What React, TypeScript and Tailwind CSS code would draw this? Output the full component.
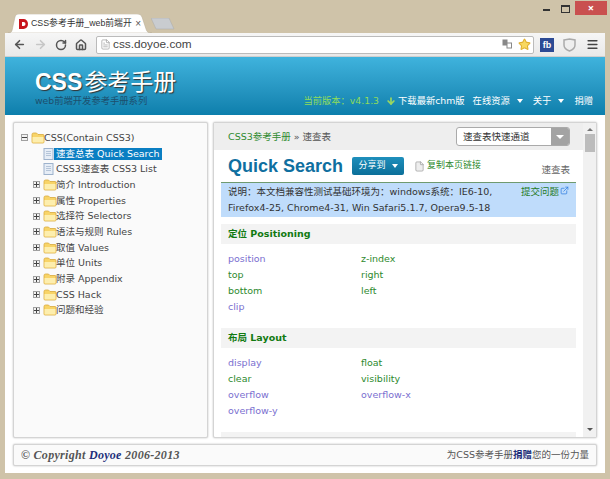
import { ArrowLeft, ArrowRight, RotateCw, Home, Star, Menu, File, FileText, ArrowDown, ExternalLink } from "lucide-react";

const cjk = "font-['DejaVu_Sans','Noto_Sans_CJK_SC',sans-serif]";

function Folder() {
  return (
    <svg width="14" height="12" viewBox="0 0 14 12" className="shrink-0">
      <path d="M1 2.5 Q1 1 2.5 1 H5.5 L7 2.5 H12 Q13 2.5 13 3.5 V10 Q13 11 12 11 H2 Q1 11 1 10 Z" fill="#f8d468" stroke="#d8a93c" strokeWidth="0.8" />
      <path d="M1.5 5 H12.5 V10 Q12.5 10.6 12 10.6 H2 Q1.5 10.6 1.5 10 Z" fill="#fdeeae" />
    </svg>
  );
}

function PageIcon() {
  return (
    <svg width="11" height="12" viewBox="0 0 11 12" className="shrink-0">
      <rect x="1" y="0.5" width="9" height="11" fill="#e6edf6" stroke="#9db2cc" />
      <path d="M3 3.5H8M3 5.5H8M3 7.5H8" stroke="#b4c4d8" />
    </svg>
  );
}

function Toggle({ open }: { open?: boolean }) {
  return (
    <span className="relative w-[7px] h-[7px] border border-[#a0a0a0] bg-[#f2f2f2] shrink-0 flex items-center justify-center">
      <span className="w-[5px] h-px bg-[#444]" />
      {!open && <span className="absolute w-px h-[5px] bg-[#444]" />}
    </span>
  );
}

const treeItems = ["简介 Introduction", "属性 Properties", "选择符 Selectors", "语法与规则 Rules", "取值 Values", "单位 Units", "附录 Appendix", "CSS Hack", "问题和经验"];

function Sidebar() {
  return (
    <aside className={`w-[195px] shrink-0 bg-[#fafafa] border border-[#d4d4d4] shadow-[0_0_2px_#bbb] rounded-[2px] pl-[7px] pt-[7px] text-[9.5px] leading-[16px] text-[#444] ${cjk}`}>
      <div className="flex items-center h-[15.7px]">
        <Toggle open />
        <span className="ml-[3px]"><Folder /></span>
        <span className="-ml-[1px]">CSS(Contain CSS3)</span>
      </div>
      <div className="flex items-center h-[15.7px] pl-[22px]">
        <PageIcon />
        <span className="bg-[#0a7ec2] text-white px-[2px] h-[12px] leading-[12px]">速查总表 Quick Search</span>
      </div>
      <div className="flex items-center h-[15.7px] pl-[22px] gap-[2px]">
        <PageIcon />
        <span>CSS3速查表 CSS3 List</span>
      </div>
      {treeItems.map((t) => (
        <div key={t} className="flex items-center h-[15.7px] pl-[12px]">
          <Toggle />
          <span className="ml-[3px]"><Folder /></span>
          <span className="-ml-[1px]">{t}</span>
        </div>
      ))}
    </aside>
  );
}

function Section({ title, rows }: { title: string; rows: [string, boolean, string?, boolean?][] }) {
  return (
    <section className="mb-[13px]">
      <h2 className={`h-[20px] bg-[#f3f3f3] pl-[7px] text-[9.5px] leading-[20px] font-bold text-[#117a11] ${cjk}`}>{title}</h2>
      <div className="pt-[7px] pl-[7px]">
        {rows.map(([a, av, b, bv]) => (
          <div key={a} className={`grid grid-cols-[133px_1fr] h-[16px] text-[9.5px] leading-[16px] ${cjk}`}>
            <span className={av ? "text-[#7a6fd0]" : "text-[#2e8a2e]"}>{a}</span>
            <span className={bv ? "text-[#7a6fd0]" : "text-[#2e8a2e]"}>{b}</span>
          </div>
        ))}
      </div>
    </section>
  );
}

function Main() {
  return (
    <main className="flex-1 flex bg-white border border-[#d4d4d4] shadow-[0_0_2px_#bbb] rounded-[2px] overflow-hidden">
      <div className="flex-1 min-w-0 flex flex-col">
        <div className={`h-[27px] shrink-0 bg-[#eeeeee] flex items-center justify-between pl-[14px] pr-[13px] text-[9.5px] ${cjk}`}>
          <div className="pt-[1px]">
            <span className="text-[#2e8a2e]">CSS3参考手册</span>
            <span className="text-[#555]"> » 速查表</span>
          </div>
          <div className="flex h-[19px] w-[114px] border border-[#aaa] rounded-[3px] overflow-hidden bg-white">
            <span className="flex-1 pl-[6px] leading-[17px] text-[#333]">速查表快速通道</span>
            <span className="w-[18px] bg-[#a3a3a3] flex items-center justify-center">
              <span className="w-0 h-0 border-x-[4px] border-x-transparent border-t-[4px] border-t-white" />
            </span>
          </div>
        </div>
        <div className="flex items-center h-[32px] pl-[14px] pr-[13px] shrink-0">
          <h1 className="font-['Liberation_Sans',sans-serif] text-[18px] leading-[24px] font-bold text-[#0f6fa0] w-[124px] whitespace-nowrap">Quick Search</h1>
          <button className={`w-[52px] h-[18px] rounded-[2px] bg-gradient-to-b from-[#1e8fbc] to-[#0b6f99] text-white text-[9px] flex items-center justify-center gap-[6px] ${cjk}`}>
            分享到
            <span className="w-0 h-0 border-x-[3.5px] border-x-transparent border-t-[4px] border-t-white" />
          </button>
          <span className={`ml-[10px] flex items-center gap-[2px] text-[9px] text-[#2e8a2e] ${cjk}`}>
            <File size={11} className="text-[#999] fill-[#eee]" strokeWidth={1.5} />
            复制本页链接
          </span>
          <span className={`ml-auto pt-[8px] text-[9.5px] text-[#666] ${cjk}`}>速查表</span>
        </div>
        <div className="mx-[7px]">
          <div className={`relative h-[35px] bg-[#bfdcfb] border-t border-[#6f9a6f] pl-[7px] pt-[1px] text-[9.5px] leading-[16px] text-[#333] ${cjk}`}>
            <p>说明：本文档兼容性测试基础环境为：windows系统：IE6-10,</p>
            <p>Firefox4-25, Chrome4-31, Win Safari5.1.7, Opera9.5-18</p>
            <span className="absolute right-[7px] top-[1px] flex items-center gap-[1px] text-[#1f7a1f]">
              提交问题
              <ExternalLink size={9} className="text-[#2f7de0] -mt-[3px]" />
            </span>
          </div>
          <div className="h-[7px]" />
          <Section
            title="定位 Positioning"
            rows={[["position", true, "z-index", false], ["top", false, "right", false], ["bottom", false, "left", false], ["clip", true]]}
          />
          <Section
            title="布局 Layout"
            rows={[["display", true, "float", false], ["clear", false, "visibility", false], ["overflow", true, "overflow-x", true], ["overflow-y", true]]}
          />
          <div className="h-[20px] bg-[#f3f3f3]" />
        </div>
      </div>
      <div className="w-[13px] shrink-0 bg-[#f1f1f1] flex flex-col items-center">
        <span className="mt-[5px] w-0 h-0 border-x-[3px] border-x-transparent border-b-[3px] border-b-[#777]" />
        <span className="mt-[3px] w-[10px] h-[18px] bg-[#bcbcbc]" />
        <span className="mt-auto mb-[6px] w-0 h-0 border-x-[3px] border-x-transparent border-t-[3px] border-t-[#555]" />
      </div>
    </main>
  );
}

export default function App() {
  return (
    <div className="w-[610px] h-[479px] bg-[#cfc3a9] flex flex-col overflow-hidden pl-[5px] pr-[5px] pb-[6px]">
      <div className="h-[33px] shrink-0 relative flex items-end">
        <div className="relative ml-[3px] w-[144px] h-[19px] flex items-center pl-[10px] pr-[11px] gap-[2px] text-[8.8px] text-[#333] font-['Liberation_Sans','Noto_Sans_CJK_SC',sans-serif]">
          <svg width="144" height="19" viewBox="0 0 144 19" className="absolute left-0 top-0">
            <path d="M0 19 C4 19 4 17 5 12 L7 3 C7.5 1 8.5 0 11 0 H129 C132 0 133 1 134 3 L138 15 C139 18 140 19 144 19 Z" fill="#fff" stroke="#b5aa94" strokeWidth="0.5" />
          </svg>
          <svg width="11" height="12" viewBox="0 0 11 12" className="relative shrink-0">
            <path d="M1 1H5.5A4.5 5 0 0 1 5.5 11H1Z" fill="#c8141c" />
            <path d="M4 4H5.5A2 2 0 0 1 5.5 8H4Z" fill="#fff" />
          </svg>
          <span className="relative flex-1 whitespace-nowrap">CSS参考手册_web前端开</span>
          <span className="relative text-[#555] text-[10px]">×</span>
        </div>
        <svg width="24" height="12" viewBox="0 0 24 12" className="-ml-[1px] mb-[3px]">
          <path d="M0 0 H18 L23 11 H5 Z" fill="#c9ccd0" stroke="#aaa" strokeWidth="0.5" />
        </svg>
        <div className="absolute right-[-2px] top-[1px] flex items-start">
          <span className="w-[7px] h-[2px] mt-[8px] bg-[#333]" />
          <span className="ml-[11px] w-[9px] h-[8px] mt-[4px] border border-[#333] border-t-[2px]" />
          <span className="ml-[5px] w-[32px] h-[14px] bg-[#c9504f] text-white text-[11px] leading-[14px] text-center font-bold">×</span>
        </div>
      </div>
      <div className="flex-1 flex flex-col bg-white min-h-0 rounded-t-[2px]">
        <div className="h-[24px] shrink-0 bg-gradient-to-b from-[#f6f6f6] to-[#e9e9e9] flex items-center border-b border-[#cfcfcf]">
          <ArrowLeft size={13} strokeWidth={3} className="ml-[8px] text-[#555]" />
          <ArrowRight size={13} strokeWidth={3} className="ml-[8px] text-[#c6c6c6]" />
          <RotateCw size={12} strokeWidth={3} className="ml-[8px] text-[#555]" />
          <Home size={12} strokeWidth={3} className="ml-[8px] text-[#555]" />
          <div className="ml-[9px] w-[438px] h-[18px] bg-white border border-[#bbb] rounded-[2px] flex items-center pl-[3px] pr-[2px] text-[11.8px] text-[#444] font-['Liberation_Sans',sans-serif]">
            <FileText size={11} className="text-[#999] mr-[2px]" strokeWidth={1.5} />
            css.doyoe.com
            <svg width="10" height="11" viewBox="0 0 10 11" className="ml-auto">
              <rect x="0.5" y="0.5" width="5" height="6" fill="#888" />
              <rect x="5" y="4" width="4.5" height="5" fill="#fff" stroke="#888" />
            </svg>
            <Star size={13} className="ml-[6px] text-[#e0b030] fill-[#f8d860]" />
          </div>
          <span className="ml-[6px] w-[14px] h-[14px] bg-[#2c4a94] text-white text-[9px] font-bold leading-[14px] text-center font-['Liberation_Sans',sans-serif]">fb</span>
          <svg width="13" height="14" viewBox="0 0 13 14" className="ml-[9px]">
            <path d="M1 2 L6.5 1 L12 2 V7 Q12 11 6.5 13 Q1 11 1 7Z" fill="#eee" stroke="#aaa" strokeWidth="1.5" />
          </svg>
          <Menu size={13} strokeWidth={3} className="ml-[10px] text-[#444]" />
        </div>
        <header className="h-[58px] shrink-0 bg-gradient-to-b from-[#3fb3dd] to-[#0c7fac] flex items-end justify-between pl-[30px] pr-[12px] pb-[9px]">
          <div className={cjk}>
            <div className="text-[23px] leading-[26px] font-bold text-white [text-shadow:1px_1px_1px_#333] font-['Liberation_Sans','Noto_Sans_CJK_SC',sans-serif]">
              CSS<span className="font-normal ml-[2px]">参考手册</span>
            </div>
            <div className="text-[9.3px] leading-[11px] text-[#1d4f6d]">web前端开发参考手册系列</div>
          </div>
          <nav className={`flex items-center text-[9.3px] leading-[11px] text-white ${cjk}`}>
            <span className="text-[#8fdc5a]">当前版本：v4.1.3</span>
            <ArrowDown size={10} strokeWidth={4} className="ml-[7px] text-[#9cd860]" />
            <span className="ml-[2px]">下载最新chm版</span>
            <span className="ml-[8px]">在线资源</span>
            <span className="ml-[7px] w-0 h-0 border-x-[3px] border-x-transparent border-t-[4px] border-t-white" />
            <span className="ml-[10px]">关于</span>
            <span className="ml-[7px] w-0 h-0 border-x-[3px] border-x-transparent border-t-[4px] border-t-white" />
            <span className="ml-[10px]">捐赠</span>
          </nav>
        </header>
        <div className="flex-1 min-h-0 flex flex-col px-[8px] pt-[7px] pb-[7px] gap-[6px]">
          <div className="flex-1 min-h-0 flex gap-[5px]">
            <Sidebar />
            <Main />
          </div>
          <footer className="h-[22px] shrink-0 bg-[#fafafa] border border-[#d4d4d4] shadow-[0_0_2px_#bbb] rounded-[2px] flex items-center justify-between pl-[7px] pr-[7px]">
            <span className="font-['Liberation_Serif',serif] italic font-bold text-[12px] tracking-[0.3px] text-[#555]">© Copyright <span className="text-[#1d2f7a]">Doyoe</span> 2006-2013</span>
            <span className={`text-[9.5px] text-[#555] ${cjk}`}>为CSS参考手册<b className="text-[#1d2f7a]">捐赠</b>您的一份力量</span>
          </footer>
        </div>
      </div>
    </div>
  );
}
